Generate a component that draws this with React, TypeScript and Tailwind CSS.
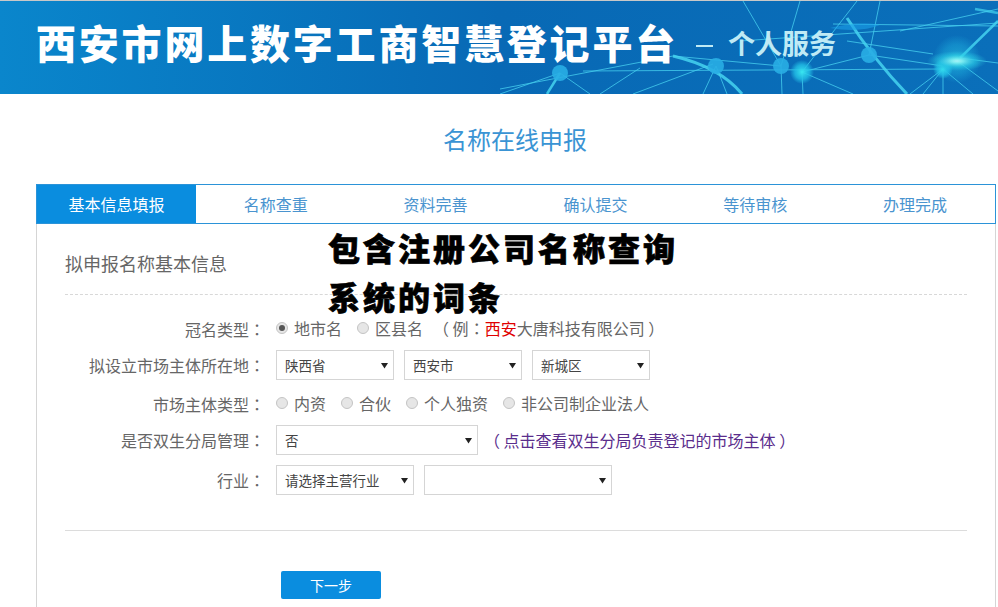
import type { ReactNode } from 'react'

const STEPS = ['名称查重', '资料完善', '确认提交', '等待审核', '办理完成']

// network drawing behind the banner title
function BannerNetwork() {
  const thin = [
    [743, 0, 781, 65], [800, 0, 781, 65], [857, 0, 802, 71], [880, 0, 869, 54],
    [560, 72, 500, 93], [560, 72, 590, 93], [716, 65, 703, 93], [716, 65, 727, 93],
    [781, 65, 782, 93], [802, 71, 853, 93], [802, 71, 803, 93],
    [583, 70, 943, 68], [500, 88, 673, 55], [673, 55, 781, 65], [633, 93, 713, 63],
    [600, 93, 640, 67], [869, 54, 943, 65], [847, 40, 933, 53], [740, 40, 998, 22],
    [833, 23, 998, 25], [900, 30, 998, 8], [802, 71, 869, 54],
    [943, 68, 910, 93], [943, 68, 923, 93], [943, 68, 943, 93], [943, 68, 973, 93],
    [960, 57, 998, 62], [960, 62, 998, 90],
  ]
  const dots = [
    [560, 72, 8], [716, 65, 8], [781, 65, 8], [869, 54, 8],
  ]
  return (
    <svg className="absolute inset-0" width="998" height="93" viewBox="0 0 998 93" fill="none">
      <defs>
        <radialGradient id="glow">
          <stop offset="0" stopColor="#ffffff" />
          <stop offset="0.2" stopColor="#a8f6f2" />
          <stop offset="0.6" stopColor="#2ccfe4" stopOpacity="0.6" />
          <stop offset="1" stopColor="#2cc4e0" stopOpacity="0" />
        </radialGradient>
        <radialGradient id="spot">
          <stop offset="0" stopColor="#39e6f0" />
          <stop offset="0.6" stopColor="#22bfe6" stopOpacity="0.8" />
          <stop offset="1" stopColor="#22bfe6" stopOpacity="0" />
        </radialGradient>
      </defs>
      {thin.map(([x1, y1, x2, y2], i) => (
        <line key={i} x1={x1} y1={y1} x2={x2} y2={y2} stroke="#45cdee" strokeOpacity="0.8" strokeWidth="1" />
      ))}
      <path d="M673 55 Q720 66 742 93" stroke="#45d4f0" strokeWidth="3" opacity="0.85" />
      <path d="M847 17 Q875 60 907 93" stroke="#45d4f0" strokeWidth="3" opacity="0.85" />
      <path d="M560 72 L547 93" stroke="#45d4f0" strokeWidth="2.5" opacity="0.85" />
      <path d="M960 57 L998 20" stroke="#45d4f0" strokeWidth="2.5" opacity="0.85" />
      <path d="M975 8 L998 12" stroke="#45d4f0" strokeWidth="2.5" opacity="0.7" />
      <path d="M830 27 Q860 20 880 24 Q860 32 830 27Z" fill="#1aa0e8" opacity="0.6" />
      {dots.map(([cx, cy, r], i) => (
        <circle key={i} cx={cx} cy={cy} r={r} fill="#29aee4" opacity="0.9" />
      ))}
      <circle cx="802" cy="71" r="12" fill="url(#spot)" />
      <circle cx="943" cy="68" r="10" fill="url(#spot)" />
      <ellipse cx="957" cy="60" rx="30" ry="10" fill="url(#glow)" />
      <circle cx="957" cy="58" r="24" fill="url(#spot)" opacity="0.45" />
    </svg>
  )
}

function Radio({ label, checked }: { label: string; checked?: boolean }) {
  return (
    <span className="flex items-center gap-[6px]">
      <span className="flex h-[12px] w-[12px] items-center justify-center rounded-full border border-[#c4c4c4] bg-[#e6e6e6]">
        {checked && <span className="h-[6px] w-[6px] rounded-full bg-[#555]" />}
      </span>
      {label}
    </span>
  )
}

function Select({ value, className }: { value?: string; className: string }) {
  return (
    <div className={`flex h-[30px] items-center justify-between border border-[#d5d5d5] pl-[8px] pr-[5px] text-[13.5px] text-[#444] ${className}`}>
      <span>{value}</span>
      <svg width="7" height="7" viewBox="0 0 7 7">
        <path d="M0 1h7L3.5 6.5z" fill="#222" />
      </svg>
    </div>
  )
}

function Row({ label, className, children }: { label: string; className: string; children: ReactNode }) {
  return (
    <div className={`flex items-center ${className}`}>
      <div className="w-[184px] shrink-0 text-right">{label}</div>
      <div className="w-[16px] shrink-0 text-center [font-family:'Noto_Sans_CJK_JP',sans-serif]">：</div>
      <div className="ml-[11px] flex items-center">{children}</div>
    </div>
  )
}

export default function App() {
  return (
    <div className="relative h-[607px] w-[998px] overflow-hidden bg-white text-[16px] text-[#666] [font-family:'Noto_Sans_CJK_SC',sans-serif]">
      {/* banner */}
      <div className="relative flex h-[94px] items-center border-t border-[#c8c8c8] bg-gradient-to-r from-[#0a86cc] via-[#0869b5] to-[#0a6fba] pl-[36px] pb-[11px]">
        <BannerNetwork />
        <span className="relative text-[40px] font-black leading-none tracking-[2.8px] text-white">西安市网上数字工商智慧登记平台</span>
        <span className="relative ml-[18px] h-[2px] w-[17px] translate-y-[4px] bg-[#bfeaf5]" />
        <span className="relative ml-[15px] text-[27px] font-bold leading-none text-[#bfeaf5]">个人服务</span>
      </div>

      <h1 className="mt-[27px] pl-[32px] text-center text-[24px] leading-[36px] text-[#3a94d4]">名称在线申报</h1>

      {/* steps */}
      <div className="ml-[36px] mt-[27px] flex h-[40px] w-[960px] border border-[#2b93d8] text-[#4a94cf]">
        <div className="flex w-[159px] items-center justify-center bg-[#0a8ddf] text-white">基本信息填报</div>
        {STEPS.map((s) => (
          <div key={s} className="flex w-[160px] items-center justify-center">{s}</div>
        ))}
      </div>

      {/* form */}
      <div className="ml-[36px] h-[384px] w-[960px] border-x border-[#d5d5d5] px-[28px]">
        <div className="h-[71px] border-b border-dashed border-[#d8d8d8] pt-[26px] text-[18px] leading-[26px]">拟申报名称基本信息</div>

        <Row label="冠名类型" className="mt-[19px] h-[30px]">
          <div className="flex items-center gap-[15px] pb-[2px]">
            <Radio label="地市名" checked />
            <Radio label="区县名" />
            <span className="-ml-[5px]">（ 例<span className="[font-family:'Noto_Sans_CJK_JP',sans-serif]">：</span><span className="text-[#e00000]">西安</span>大唐科技有限公司 ）</span>
          </div>
        </Row>
        <Row label="拟设立市场主体所在地" className="mt-[6px] h-[30px]">
          <div className="flex gap-[10px]">
            <Select value="陕西省" className="w-[118px]" />
            <Select value="西安市" className="w-[118px]" />
            <Select value="新城区" className="w-[118px]" />
          </div>
        </Row>
        <Row label="市场主体类型" className="mt-[9px] h-[30px]">
          <div className="flex items-center gap-[15px] pb-[2px]">
            <Radio label="内资" />
            <Radio label="合伙" />
            <Radio label="个人独资" />
            <Radio label="非公司制企业法人" />
          </div>
        </Row>
        <Row label="是否双生分局管理" className="mt-[6px] h-[30px]">
          <Select value="否" className="w-[202px]" />
          <span className="ml-[6px] text-[#5a2d8c]">（ 点击查看双生分局负责登记的市场主体 ）</span>
        </Row>
        <Row label="行业" className="mt-[10px] h-[30px]">
          <div className="flex gap-[10px]">
            <Select value="请选择主营行业" className="w-[138px]" />
            <Select className="w-[188px]" />
          </div>
        </Row>

        <div className="mt-[35px] border-t border-[#dcdcdc]" />
        <button className="ml-[216px] mt-[40px] h-[28px] w-[100px] rounded-[2px] bg-[#0a8ddf] text-[14px] text-white">下一步</button>
      </div>

      {/* title stamped over the page */}
      <div className="absolute left-[328px] top-[223px] w-[352px] text-[32px] font-black leading-[49px] tracking-[3px] text-black [-webkit-text-stroke:0.7px_black]">包含注册公司名称查询系统的词条</div>
    </div>
  )
}
